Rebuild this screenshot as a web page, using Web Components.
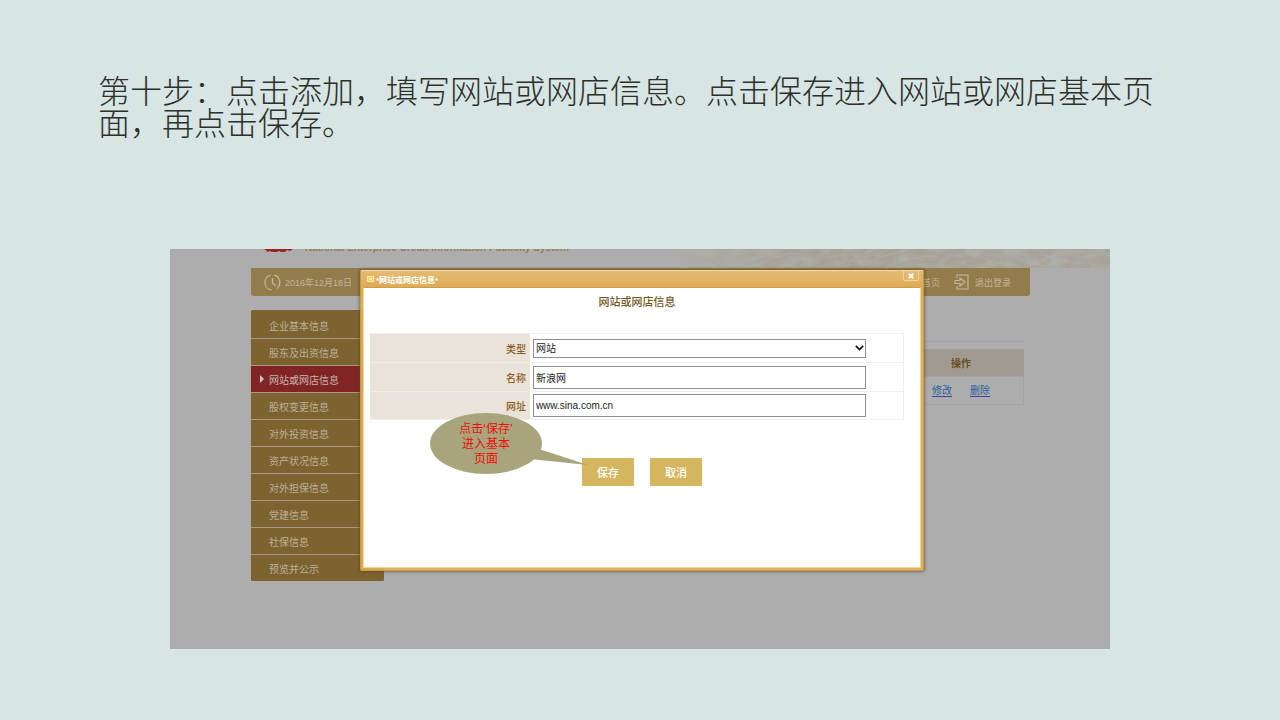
<!DOCTYPE html>
<html lang="zh-CN">
<head>
<meta charset="utf-8">
<meta name="viewport" content="width=device-width, initial-scale=1">
<title>网站或网店信息</title>
<style>
  body {
    margin: 0;
    min-height: 100vh;
    background: #d7e5e4;
    font-family: "Liberation Sans", "Noto Sans CJK SC", sans-serif;
  }
</style>
</head>
<body>
<guide-slide>
  <span slot="title">第十步：点击添加，填写网站或网店信息。点击保存进入网站或网店基本页面，再点击保存。</span>
  <credit-page>
    <side-menu slot="menu" active="2"></side-menu>
    <action-table slot="content"></action-table>
    <modal-dialog slot="dialog" caption="*网站或网店信息*" heading="网站或网店信息">
      <labelled-field label="类型" value="网站" kind="select"></labelled-field>
      <labelled-field label="名称" value="新浪网"></labelled-field>
      <labelled-field label="网址" value="www.sina.com.cn"></labelled-field>
      <action-button slot="actions" label="保存">
        <speech-bubble>点击‘保存’<br>进入基本<br>页面</speech-bubble>
      </action-button>
      <action-button slot="actions" label="取消"></action-button>
    </modal-dialog>
  </credit-page>
</guide-slide>

<script>
/**
 * Base class: attaches an open shadow root and fills it with the markup of the subclass.
 */
class BaseElement extends HTMLElement {
  constructor () {
    super()
    this.attachShadow({ mode: 'open' })
  }

  connectedCallback () {
    this.shadowRoot.innerHTML = this.markup()
  }
}

/**
 * The slide: a large title above the page it explains.
 */
class GuideSlide extends BaseElement {
  markup () {
    return `
      <style>
      :host {
        display: flex;
        flex-direction: column;
        gap: 112px;
        padding: 73px 0 71px;
      }

      h1 {
        margin: 0;
        padding: 0 110px 0 98px;
        font-family: "Noto Sans CJK SC", sans-serif;
        font-size: 32px;
        font-weight: 300;
        line-height: 32px;
        color: #2d3029;
      }

      main {
        padding: 0 170px;
      }
      </style>
      <h1><slot name="title"></slot></h1>
      <main><slot></slot></main>
    `
  }
}

/**
 * The dimmed page of the credit system with its banner, top bar and columns.
 */
class CreditPage extends BaseElement {
  markup () {
    return `
      <style>
      :host {
        display: block;
        position: relative;
        padding-bottom: 68px;
        background: #adadad;
        overflow: hidden;
      }

      .banner {
        display: flex;
        height: 19px;
        overflow: hidden;
      }

      .brand {
        display: flex;
        flex: 1;
        align-items: flex-start;
        gap: 12px;
        padding-left: 93px;
      }

      .brand span {
        margin-top: -7px;
        font-size: 10px;
        font-weight: bold;
        line-height: 12px;
        white-space: nowrap;
        color: #8c7f5c;
      }

      .texture {
        width: 430px;
        height: 19px;
      }

      .bar {
        display: flex;
        justify-content: space-between;
        align-items: center;
        height: 28px;
        margin: 0 80px 0 81px;
        padding: 0 19px 0 13px;
        border-radius: 0 0 3px 3px;
        background: #937c4c;
        color: #c2b69b;
        font-size: 9px;
      }

      .bar div,
      .bar nav,
      .bar a {
        display: flex;
        align-items: center;
      }

      .bar div {
        gap: 4px;
      }

      .bar nav {
        gap: 14px;
      }

      .bar a {
        gap: 6px;
        color: inherit;
        text-decoration: none;
      }

      .columns {
        display: flex;
        justify-content: space-between;
        align-items: flex-start;
        margin: 14px 86px 0 81px;
      }
      </style>
      <header class="banner">
        <div class="brand">
          <svg width="30" height="4" viewBox="0 0 30 4"><path d="M0 0h30l-3 2-3-1-2 2h-4l-2-1-2 1h-5l-2-1-3 1-1-2z" fill="#9c221f"/></svg>
          <span>National Enterprise Credit Information Publicity System</span>
        </div>
        <svg class="texture" viewBox="0 0 430 19" preserveAspectRatio="none">
          <defs>
            <linearGradient id="fade"><stop offset="0" stop-color="#a39d8e" stop-opacity=".2"/><stop offset=".35" stop-color="#a39d8e" stop-opacity=".8"/><stop offset="1" stop-color="#a39d8e" stop-opacity=".6"/></linearGradient>
            <filter id="grain" x="0" y="0" width="100%" height="100%" color-interpolation-filters="sRGB">
              <feTurbulence type="fractalNoise" baseFrequency=".06 .12" numOctaves="3" seed="8"/>
              <feColorMatrix values="0 0 0 0 .69  0 0 0 0 .69  0 0 0 0 .67  1.8 0 0 0 -.6"/>
            </filter>
          </defs>
          <rect width="430" height="19" fill="url(#fade)"/>
          <rect width="430" height="19" filter="url(#grain)"/>
          <path d="M30 19q20-18 60-16M70 19q25-14 50-15M165 19q10-14 30-18M180 19q20-14 50-18M205 19q25-12 50-12M290 2q20 14 50 15M325 1q20 14 40 16M350 17q25-16 60-15" fill="none" stroke="#b4b1a8" stroke-opacity=".7"/>
        </svg>
      </header>
      <div class="bar">
        <div>
          <svg width="17" height="17" viewBox="0 0 17 17" fill="none" stroke="currentColor" stroke-width="1.3"><path d="M6.500 1.200a7.500 7.500 0 0 0 1 14.700M10 1.200a7.500 7.500 0 0 1 3 13.200M8.500 4v5l3 3"/></svg>
          <time datetime="2016-12-18">2016年12月18日</time>
        </div>
        <nav>
          <a href="#home"><svg width="14" height="10" viewBox="0 0 14 10" fill="currentColor"><path d="M0 4l6-4v3h7v3H6v3z"/></svg>首页</a>
          <a href="#exit"><svg width="15" height="16" viewBox="0 0 15 16" fill="none" stroke="currentColor" stroke-width="1.200"><path d="M3 4V1h11v14H3v-3M1 6.500h5V4l5 4-5 4V9.500H1z"/></svg>退出登录</a>
        </nav>
      </div>
      <div class="columns">
        <slot name="menu"></slot>
        <slot name="content"></slot>
      </div>
      <slot name="dialog"></slot>
    `
  }
}

/**
 * The menu on the left. The attribute "active" holds the index of the current item.
 */
class SideMenu extends BaseElement {
  markup () {
    const labels = ['企业基本信息', '股东及出资信息', '网站或网店信息', '股权变更信息', '对外投资信息',
      '资产状况信息', '对外担保信息', '党建信息', '社保信息', '预览并公示']
    const active = Number(this.getAttribute('active'))
    const items = labels.map((label, index) => `
      <li><a href="#item${index}"${index === active ? ' class="active"' : ''}>${label}</a></li>
    `).join('')

    return `
      <style>
      :host {
        display: block;
        width: 133px;
      }

      ul {
        list-style: none;
        margin: 0;
        padding: 1px 0 0;
        border-radius: 2px;
        background: #7d6330;
        overflow: hidden;
      }

      li {
        border-top: 1px solid #a59a80;
      }

      li:first-child {
        border-top-color: #7d6330;
      }

      a {
        display: flex;
        align-items: center;
        height: 26px;
        padding-left: 18px;
        background: #7d6330;
        color: #bcb199;
        font-size: 10px;
        text-decoration: none;
      }

      a.active {
        padding-left: 9px;
        background: #802426;
        color: #c9b4ac;
      }

      a.active::before {
        content: "";
        margin-right: 5px;
        border: solid transparent;
        border-width: 4px 0 4px 4px;
        border-left-color: #d2c4be;
      }
      </style>
      <ul>${items}</ul>
    `
  }
}

/**
 * The table behind the dialog, of which the column of actions stays in view.
 */
class ActionTable extends BaseElement {
  markup () {
    return `
      <style>
      :host {
        display: block;
        width: 126px;
        margin-top: 31px;
        padding-top: 7px;
        border-top: 1px solid #a2a2a2;
        font-size: 10px;
      }

      table {
        width: 100%;
        border-collapse: collapse;
      }

      th {
        height: 27px;
        padding: 0;
        background: #a19a91;
        color: #6a4f20;
      }

      td {
        height: 27px;
        padding: 0;
        border: 1px solid #a3a3a3;
        text-align: center;
      }

      a {
        display: inline-block;
        margin: 0 9px;
        border-bottom: 1px solid #3d3da6;
        line-height: 11px;
        color: #2b629b;
        text-decoration: none;
      }
      </style>
      <table>
        <thead><tr><th>操作</th></tr></thead>
        <tbody><tr><td><a href="#edit">修改</a><a href="#delete">删除</a></td></tr></tbody>
      </table>
    `
  }
}

/**
 * The dialog that lies over the page, with fields and a row of buttons.
 */
class ModalDialog extends BaseElement {
  markup () {
    return `
      <style>
      :host {
        position: absolute;
        top: 21px;
        left: 190px;
        right: 186px;
        border: 1px solid #c79746;
        border-top-color: #f3d8a0;
        border-radius: 2px;
        background: rgba(226, 177, 93, .9);
        box-shadow: 0 0 3px 1px rgba(90, 70, 30, .6);
      }

      header {
        display: flex;
        align-items: center;
        gap: 2px;
        height: 16px;
        padding: 0 4px 0 6px;
        background: linear-gradient(rgba(231, 191, 122, .8), rgba(222, 171, 84, .8));
        color: #fff;
        font-size: 8px;
        font-weight: bold;
      }

      header span {
        flex: 1;
      }

      header button {
        display: flex;
        align-self: flex-start;
        justify-content: center;
        align-items: center;
        width: 16px;
        height: 10px;
        padding: 0;
        border: 1px solid #efd39c;
        border-top: 0;
        border-radius: 0 0 2px 2px;
        background: none;
        color: inherit;
      }

      section {
        margin: 0 2px 2px;
        padding-bottom: 81px;
        border: 1px solid #f3d696;
        border-top-color: #cf9c48;
        background: #fff;
      }

      h2 {
        margin: 0 16px 23px 6px;
        padding-top: 6px;
        font-size: 11px;
        font-weight: 500;
        line-height: 16px;
        text-align: center;
        color: #735522;
      }

      .fields {
        margin: 0 16px 38px 6px;
        border: solid #efefef;
        border-width: 0 1px 0 0;
      }

      .actions {
        display: flex;
        justify-content: center;
        gap: 16px;
      }
      </style>
      <header>
        <svg width="7" height="6" viewBox="0 0 7 6"><path d="M.5.5h6v5h-6z" fill="#e9cd5d" stroke="#f7ec9d"/><path d="M2 3h3" stroke="#fff"/></svg>
        <span>${this.getAttribute('caption')}</span>
        <button type="button" aria-label="关闭"><svg width="6" height="6" viewBox="0 0 6 6"><path d="M.8.8l4.400 4.400M5.200.8L.8 5.200" stroke="#fff" stroke-width="2"/></svg></button>
      </header>
      <section>
        <h2>${this.getAttribute('heading')}</h2>
        <div class="fields"><slot></slot></div>
        <div class="actions"><slot name="actions"></slot></div>
      </section>
    `
  }
}

/**
 * One row of the form: a label and its text box or drop-down.
 */
class LabelledField extends BaseElement {
  markup () {
    const value = this.getAttribute('value')
    const control = this.getAttribute('kind') === 'select'
      ? `<select id="control"><option>${value}</option></select>
         <svg width="9" height="6" viewBox="0 0 9 6"><path d="M.8.8l3.700 3.700L8.200.8" fill="none" stroke="#111" stroke-width="1.700"/></svg>`
      : `<input id="control" type="text" value="${value}">`

    return `
      <style>
      :host {
        display: flex;
        height: 28px;
        border-top: 1px solid #efefef;
        font-size: 10px;
      }

      :host(:last-of-type) {
        height: 27px;
        border-bottom: 1px solid #efefef;
      }

      label {
        display: flex;
        flex: 0 0 30%;
        justify-content: flex-end;
        align-items: center;
        box-sizing: border-box;
        padding-right: 4px;
        background: #eae3d9;
        color: #8b5d22;
        font-weight: 500;
      }

      .control {
        display: grid;
        flex: 1;
        grid-template-columns: 90%;
        align-items: center;
        padding-left: 3px;
      }

      input,
      select,
      svg {
        grid-area: 1 / 1;
      }

      input,
      select {
        box-sizing: border-box;
        width: 100%;
        height: 23px;
        margin: 0;
        padding: 0 2px;
        border: 1px solid #8f8f96;
        border-radius: 0;
        background: #fff;
        color: #222;
        font: inherit;
      }

      select {
        appearance: none;
        height: 19px;
      }

      svg {
        justify-self: end;
        margin-right: 2px;
        pointer-events: none;
      }
      </style>
      <label for="control">${this.getAttribute('label')}</label>
      <div class="control">${control}</div>
    `
  }
}

/**
 * A gold button. A hint can be slotted in beside it.
 */
class ActionButton extends BaseElement {
  markup () {
    return `
      <style>
      :host {
        display: block;
        position: relative;
      }

      button {
        display: block;
        width: 52px;
        height: 28px;
        padding: 0;
        border: 0;
        background: #d4b65e;
        color: #fff;
        font: 500 11px "Noto Sans CJK SC", sans-serif;
      }
      </style>
      <button type="button">${this.getAttribute('label')}</button>
      <slot></slot>
    `
  }
}

/**
 * A bubble whose tail points at the element it is placed in.
 */
class SpeechBubble extends BaseElement {
  markup () {
    return `
      <style>
      :host {
        position: absolute;
        top: -45px;
        left: -152px;
        display: grid;
        grid-template-columns: 112px 48px;
        align-items: center;
        pointer-events: none;
      }

      svg {
        grid-area: 1 / 1 / 2 / 3;
      }

      p {
        grid-area: 1 / 1;
        margin: 0;
        padding-top: 2px;
        color: #f20d0d;
        font-size: 12px;
        line-height: 15px;
        text-align: center;
      }
      </style>
      <svg width="160" height="61" viewBox="0 0 160 61" fill="#a8a47c"><ellipse cx="56" cy="30.500" rx="56" ry="30.500"/><path d="M109 36l49 16-58-6z"/></svg>
      <p><slot></slot></p>
    `
  }
}

customElements.define('guide-slide', GuideSlide)
customElements.define('credit-page', CreditPage)
customElements.define('side-menu', SideMenu)
customElements.define('action-table', ActionTable)
customElements.define('modal-dialog', ModalDialog)
customElements.define('labelled-field', LabelledField)
customElements.define('action-button', ActionButton)
customElements.define('speech-bubble', SpeechBubble)
</script>
</body>
</html>
